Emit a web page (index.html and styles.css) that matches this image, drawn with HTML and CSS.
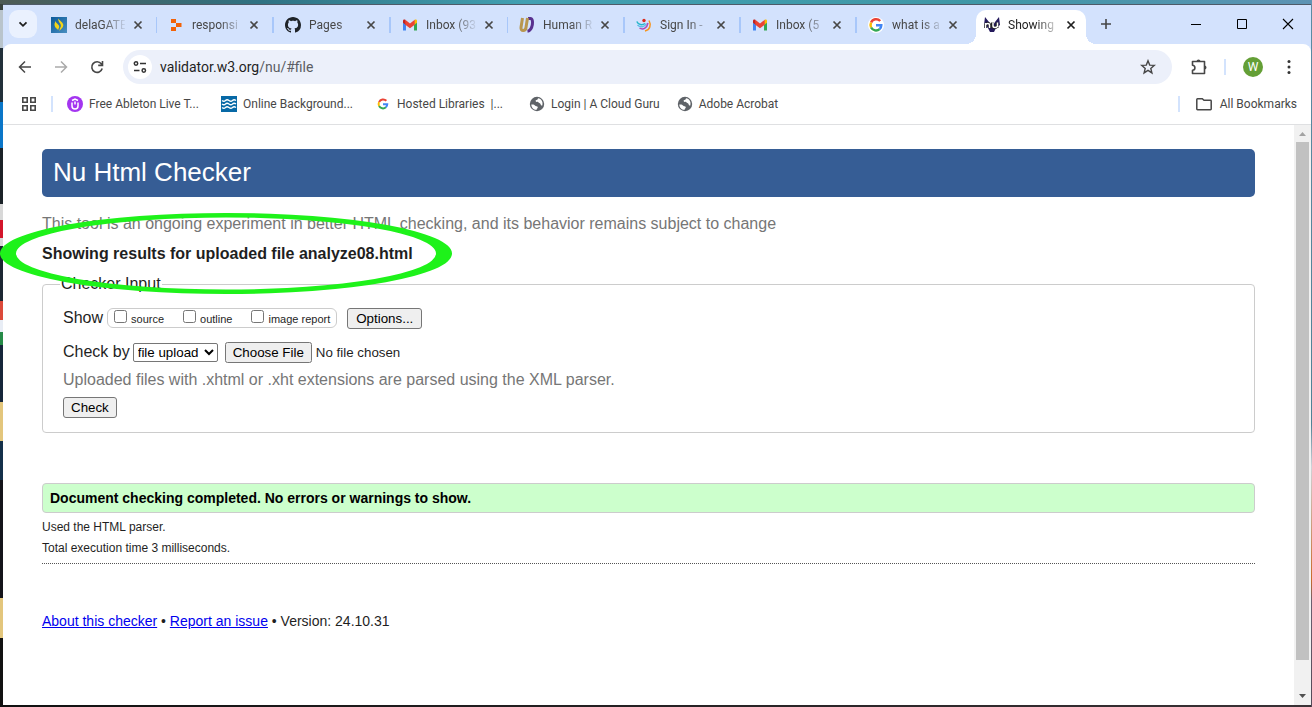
FILE: index.html
```html
<!DOCTYPE html>
<html lang="en">
<head>
<meta charset="utf-8">
<title>Showing results for uploaded file analyze08.html - Nu Html Checker</title>
<link rel="stylesheet" href="styles.css">
</head>
<body>
<svg width="0" height="0" class="defs" aria-hidden="true">
  <symbol id="x" viewBox="0 0 16 16"><path d="M4.500 4.500l7 7M11.500 4.500l-7 7" stroke="currentColor" stroke-width="1.700" fill="none"/></symbol>
  <symbol id="gmail" viewBox="0 0 16 16"><path d="M1 4v9.500h3V7z" fill="#4285f4"/><path d="M12 7v6.500h3V4z" fill="#34a853"/><path d="M12 4.500V8l3-2.300V4c0-1.500-1.500-1.800-2.300-1.200z" fill="#fbbc04"/><path d="M4 4.500V8L1 5.700V4c0-1.500 1.500-1.800 2.300-1.200z" fill="#c5221f"/><path d="M3.300 2.800L8 6.500l4.700-3.700v5L8 11.200 3.300 7.700z" fill="#ea4335"/></symbol>
  <symbol id="goog" viewBox="0 0 16 16"><g fill="none" stroke-width="2.500"><path d="M12.200 4A5.500 5.500 0 0 0 3.100 5.600" stroke="#ea4335"/><path d="M3.100 5.600a5.500 5.500 0 0 0 0 4.900" stroke="#fbbc05"/><path d="M3.100 10.500a5.500 5.500 0 0 0 8.500 1.600" stroke="#34a853"/><path d="M11.600 12.100A5.500 5.500 0 0 0 13.300 8.200H8" stroke="#4285f4"/></g></symbol>
  <symbol id="globe" viewBox="0 0 16 16"><circle cx="8" cy="8" r="7.200" fill="#5f6368"/><path d="M2.300 8.500c2-.3 3 .2 4 1.200.8.900 2.600.2 2.500 1.700 0 1-1.200 1-1.300 2.500C4.500 13.800 2.300 11.500 2.300 8.500zM9 2.300c-.4 1-.3 1.500-1.500 1.700-1.200.2-1 1.300-.4 1.700.9.500 1.800-.2 2.500.9.700 1 2 .5 2.100 1.900.1 1 .9 1.200 1.600.9C14.300 6 12.500 2.700 9 2.300z" fill="#fff"/></symbol>
</svg>
<div class="window">
  <header class="tabstrip">
    <button class="tabsearch" aria-label="Search tabs"><svg viewBox="0 0 16 16"><path d="M4.500 6.300L8 9.800l3.500-3.500" stroke="#1f1f1f" stroke-width="1.800" fill="none"/></svg></button>
    <nav class="tabs">
      <div class="tab"><svg class="fav" viewBox="0 0 16 16"><defs><linearGradient id="b" x2="1" y2="1"><stop stop-color="#0b5a9a"/><stop offset="1" stop-color="#4a8fc0"/></linearGradient></defs><path d="M0 0h16v16H0z" fill="url(#b)"/><path d="M7 1.500C9.500 4 12.500 6 12.300 8.500 12 11 9.500 12 8.500 14c-.3-2.500 2-4 1.300-6C9.300 6 7 4.500 7 1.500zM4.500 4C5 6.500 8.500 7.500 8.200 10c-.2 1.300-1 2-1 3C5.500 11.500 3.500 10 3.500 7.500c0-1.500.8-2.300 1-3.500z" fill="#f4d516"/></svg><a href="#tab1" class="title">delaGATE</a><button aria-label="Close tab"><svg><use href="#x"/></svg></button></div>
      <div class="tab"><svg class="fav" viewBox="0 0 16 16"><path d="M3 2h5v4H3zM8 6h5.500v4H8zM3 10h5v4H3z" fill="#f26207"/></svg><a href="#tab2" class="title">responsi</a><button aria-label="Close tab"><svg><use href="#x"/></svg></button></div>
      <div class="tab"><svg class="fav" viewBox="0 0 16 16"><path fill="#1f2328" d="M8 0C3.580 0 0 3.580 0 8c0 3.540 2.290 6.530 5.470 7.590.4.070.55-.17.55-.38 0-.19-.01-.82-.01-1.490-2.010.37-2.530-.49-2.690-.94-.09-.23-.48-.94-.82-1.130-.28-.15-.68-.52-.01-.53.63-.01 1.080.58 1.230.82.72 1.210 1.870.87 2.330.66.07-.52.28-.87.51-1.070-1.780-.2-3.640-.89-3.640-3.950 0-.87.31-1.590.82-2.150-.08-.2-.36-1.020.08-2.120 0 0 .67-.21 2.200.82.64-.18 1.320-.27 2-.27s1.360.09 2 .27c1.530-1.040 2.200-.82 2.200-.82.44 1.100.16 1.920.08 2.120.51.56.82 1.270.82 2.150 0 3.070-1.870 3.750-3.650 3.950.29.25.54.73.54 1.480 0 1.070-.01 1.930-.01 2.200 0 .21.15.46.55.38A8 8 0 0 0 16 8c0-4.420-3.580-8-8-8z"/></svg><a href="#tab3" class="title">Pages</a><button aria-label="Close tab"><svg><use href="#x"/></svg></button></div>
      <div class="tab"><svg class="fav"><use href="#gmail"/></svg><a href="#tab4" class="title">Inbox (93</a><button aria-label="Close tab"><svg><use href="#x"/></svg></button></div>
      <div class="tab"><svg class="fav" viewBox="0 0 16 16"><path d="M9 1.500h2.500c3.500 0 2.500 12-3 12.700" stroke="#59318f" stroke-width="3" fill="none"/><path d="M3.500 1L2 10.500c-.5 4 4.500 4 5 0L8.500 1" stroke="#b8974f" stroke-width="3" fill="none"/></svg><a href="#tab5" class="title">Human R</a><button aria-label="Close tab"><svg><use href="#x"/></svg></button></div>
      <div class="tab"><svg class="fav" viewBox="0 0 16 16"><g fill="none" stroke-width="1.500"><path d="M.8 4.500c1.500 3.500 5.500 4 8.200 2" stroke="#25b5c9"/><path d="M1.500 8c3 2.800 7 2.200 9-1.500" stroke="#5ebde8"/><path d="M3.500 11.200c4 2 7.500-.5 8.500-5.200" stroke="#b04bb5"/><path d="M9 14c5-1 6.500-6 4-10.500" stroke="#f7941d"/></g><circle cx="8" cy="3.500" r="1.700" fill="#d9291c"/></svg><a href="#tab6" class="title">Sign In -</a><button aria-label="Close tab"><svg><use href="#x"/></svg></button></div>
      <div class="tab"><svg class="fav"><use href="#gmail"/></svg><a href="#tab7" class="title">Inbox (5</a><button aria-label="Close tab"><svg><use href="#x"/></svg></button></div>
      <div class="tab"><svg class="fav round"><use href="#goog"/></svg><a href="#tab8" class="title">what is a</a><button aria-label="Close tab"><svg><use href="#x"/></svg></button></div>
      <div class="tab active"><svg class="fav" viewBox="0 0 16 16"><path d="M1 0l4 5 3 5 3-5 4-5 1 8-4 3-2 4H6l-2-4-4-3z" fill="#241a5c"/><path d="M1.500 11V6.500M1.500 8c1-2 4-2 4 0v3M8.500 5.500V9c0 2 4 2 4.500 0V5.500V11" stroke="#222" stroke-width="3" fill="none"/><path d="M1.500 11V6M1.500 8c1-2 4-2 4 0v3M9 5.500V9c0 2 4 2 4.500 0V5.500V10" stroke="#fff" stroke-width="1.500" fill="none"/></svg><a href="#tab9" class="title">Showing</a><button aria-label="Close tab"><svg><use href="#x"/></svg></button></div>
    </nav>
    <button class="newtab" aria-label="New tab"><svg viewBox="0 0 16 16"><path d="M8 3v10M3 8h10" stroke="#474747" stroke-width="1.600"/></svg></button>
    <div class="controls">
      <button aria-label="Minimize"><svg viewBox="0 0 16 16"><path d="M3 8.500h10" stroke="#000"/></svg></button>
      <button aria-label="Maximize"><svg viewBox="0 0 16 16"><path d="M3.500 3.500h9v9h-9z" stroke="#000" fill="none"/></svg></button>
      <button aria-label="Close"><svg viewBox="0 0 16 16"><path d="M3 3l10 10M13 3L3 13" stroke="#000" stroke-width="1.100"/></svg></button>
    </div>
  </header>
  <div class="chrome">
    <div class="toolbar">
      <button class="tool" aria-label="Back"><svg viewBox="0 0 16 16"><path d="M14 8H3M8 2.500L2.500 8 8 13.500" stroke="#474747" stroke-width="1.500" fill="none"/></svg></button>
      <button class="tool" aria-label="Forward"><svg viewBox="0 0 16 16"><path d="M2 8h11M8 2.500L13.500 8 8 13.500" stroke="#aaa" stroke-width="1.500" fill="none"/></svg></button>
      <button class="tool" aria-label="Reload"><svg viewBox="0 0 16 16"><path d="M13.200 9.500A5.300 5.300 0 1 1 12.300 4.800L13.500 6M13.500 2v4.400H9.200" stroke="#474747" stroke-width="1.600" fill="none"/></svg></button>
      <div class="omnibox">
        <button class="siteinfo" aria-label="Site information"><svg viewBox="0 0 16 16"><g fill="none" stroke="#333" stroke-width="1.500"><circle cx="4" cy="4.500" r="1.700"/><path d="M8 4.500h6M2 11.500h5.500"/><circle cx="11.800" cy="11.500" r="1.700"/></g></svg></button>
        <div class="url" role="textbox" aria-label="Address">validator.w3.org<span>/nu/#file</span></div>
        <button class="star" aria-label="Bookmark this tab"><svg viewBox="0 0 16 16"><path d="M8 1.800l1.700 4.300 4.600.3-3.500 3 1.100 4.500L8 11.400l-3.900 2.500 1.100-4.500-3.500-3 4.600-.3z" fill="none" stroke="#474747" stroke-width="1.400"/></svg></button>
      </div>
      <button class="ext" aria-label="Extensions"><svg viewBox="0 0 18 18"><path d="M2.500 3.500h12v12h-12v-3.200c3.200 0 3.200-5 0-5z" fill="none" stroke="#474747" stroke-width="1.600" stroke-linejoin="round"/><path d="M6.500 3.500a2 2 0 0 1 4 0zM14.500 7.500a2 2 0 0 1 0 4z" fill="#474747"/></svg></button>
      <span class="bar"></span>
      <button class="avatar" aria-label="Profile">W</button>
      <button class="menu" aria-label="Menu"><svg viewBox="0 0 16 16"><g fill="#333"><circle cx="8" cy="2.500" r="1.500"/><circle cx="8" cy="8" r="1.500"/><circle cx="8" cy="13.500" r="1.500"/></g></svg></button>
    </div>
    <nav class="bookmarks">
      <button class="apps" aria-label="Apps"><svg viewBox="0 0 16 16"><path d="M1.800 1.800h4.400v4.400H1.800zM9.800 1.800h4.400v4.400H9.800zM1.800 9.800h4.400v4.400H1.800zM9.800 9.800h4.400v4.400H9.800z" fill="none" stroke="#474747" stroke-width="1.600"/></svg></button>
      <span class="bar"></span>
      <a href="#b1" class="bm clip"><svg viewBox="0 0 16 16"><circle cx="8" cy="8" r="8" fill="#a435f0"/><path d="M5 6.500V10a3 3 0 0 0 6 0V6.500M5 4.500L8 3l3 1.500M8 5.500v3" fill="none" stroke="#fff" stroke-width="1.500"/></svg><span>Free Ableton Live T...</span></a>
      <a href="#b2" class="bm clip"><svg viewBox="0 0 16 16"><path d="M0 0h16v16H0z" fill="#0769a6"/><path d="M1 4.500q2 1.500 3.500 0t3.500 0 3.500 0 3.500 0M1 8q2 1.500 3.500 0t3.500 0 3.500 0 3.500 0M1 11.500q2 1.500 3.500 0t3.500 0 3.500 0 3.500 0" stroke="#fff" stroke-width="1.300" fill="none"/></svg><span>Online Background...</span></a>
      <a href="#b3" class="bm clip"><svg viewBox="-2 -2 20 20"><use href="#goog" width="16" height="16"/></svg><span>Hosted Libraries &nbsp;|...</span></a>
      <a href="#b4" class="bm"><svg><use href="#globe"/></svg><span>Login | A Cloud Guru</span></a>
      <a href="#b5" class="bm"><svg><use href="#globe"/></svg><span>Adobe Acrobat</span></a>
      <div class="allbm"><span class="bar"></span><a href="#all" class="bm"><svg viewBox="0 0 16 16"><path d="M.8 3.500V13c0 .4.300.7.700.7h13c.4 0 .7-.3.700-.7V5c0-.4-.3-.7-.7-.7H8L6.300 2.700H1.500c-.4 0-.7.300-.7.800z" fill="none" stroke="#474747" stroke-width="1.500"/></svg><span>All Bookmarks</span></a></div>
    </nav>
  </div>
  <div class="viewport">
    <main class="page">
      <h1>Nu Html Checker</h1>
      <p class="lead">This tool is an ongoing experiment in better HTML checking, and its behavior remains subject to change</p>
      <h2>Showing results for uploaded file analyze08.html</h2>
      <form>
        <fieldset class="input">
          <legend>Checker Input</legend>
          <div class="row show">
            <span>Show</span>
            <span class="checks">
              <span class="check"><input type="checkbox" id="src"><label for="src">source</label></span>
              <span class="check"><input type="checkbox" id="out"><label for="out">outline</label></span>
              <span class="check"><input type="checkbox" id="img"><label for="img">image report</label></span>
            </span>
            <button type="button" class="btn">Options...</button>
          </div>
          <div class="row by">
            <label for="by">Check by</label>
            <select id="by"><option>file upload</option></select>
            <input type="file" aria-label="File to check">
          </div>
          <p class="note">Uploaded files with .xhtml or .xht extensions are parsed using the XML parser.</p>
          <button type="button" class="btn">Check</button>
        </fieldset>
      </form>
      <p class="success">Document checking completed. No errors or warnings to show.</p>
      <p class="detail">Used the HTML parser.</p>
      <p class="detail">Total execution time 3 milliseconds.</p>
      <hr>
      <p class="about"><a href="#about">About this checker</a> • <a href="#issue">Report an issue</a> • Version: 24.10.31</p>
    </main>
    <div class="scroll" aria-hidden="true">
      <svg viewBox="0 0 17 17"><path d="M5 11l3.500-4 3.500 4z" fill="#a3a3a3"/></svg>
      <div class="thumb"></div>
      <svg viewBox="0 0 17 17"><path d="M5 6l3.500 4L12 6z" fill="#505050"/></svg>
    </div>
  </div>
</div>
<svg class="ring" viewBox="0 0 452 81" aria-hidden="true"><path fill-rule="evenodd" fill="#1ef21a" d="M0 40.500a226 40.500 0 0 1 452 0a226 40.500 0 0 1-452 0zM16 40.500a210 36 0 0 0 420 0a210 36 0 0 0-420 0z"/></svg>
</body>
</html>
```
FILE: styles.css
```css
* { box-sizing: border-box; }
body {
  margin: 0;
  height: 100vh;
  padding: 4px 1px 2px 3px;
  display: flex;
  overflow: hidden;
  font-family: "Liberation Sans", Arial, sans-serif;
  background:
    linear-gradient(90deg, #4d5b55, #2f7283 20%, #41a0b2 40%, #3f97a6 75%, #5d93b4) top / 100% 4px no-repeat,
    linear-gradient(#5a8ca5, #4f8296 60%, #cfd3d8 66%, #c96a2a 82%, #6a6070 85%, #544a58) right / 1px 100% no-repeat,
    linear-gradient(90deg, #111, #3a3236) bottom / 100% 2px no-repeat,
    linear-gradient(#39433e 0 10px, #b9c4cc 10px 48px, #22303a 48px 102px, #0a76c8 102px 148px, #1b2228 148px 204px, #d8d8d8 204px 220px, #d3152b 220px 238px, #d8d8d8 238px 246px, #1d2733 246px 301px, #dc4a3a 301px 320px, #e8edf5 320px 332px, #268a48 332px 345px, #16263a 345px 402px, #e3c67c 402px 441px, #14304a 441px 480px, #14141a 480px 598px, #e3c67c 598px 638px, #111 638px);
}
button { border: 0; padding: 0; background: none; display: grid; place-items: center; }
a { color: inherit; text-decoration: none; }
svg { display: block; flex: none; }
h1, h2, p { margin: 0; }
.defs { position: absolute; }
.window { flex: 1; min-width: 0; display: flex; flex-direction: column; border-top: 1px solid #4e5a68; background: #d3e2fd; }
.tabstrip, .chrome { font-family: Roboto, "Open Sans", sans-serif; font-size: 12px; color: #474747; }
.tabstrip { display: flex; height: 39px; padding-left: 6px; }
.tabsearch { width: 28px; height: 28px; margin: 5px 3px 0 0; border-radius: 9px; background: #eaf1fe; }
.tabsearch svg { width: 16px; height: 16px; }
.tabs { display: flex; }
.tab { width: 117px; display: flex; align-items: center; padding-left: 11px; position: relative; }
.tab:nth-child(n+6) { width: 116px; }
.tab::after { content: ""; width: 2px; height: 16px; background: #a8c7fa; margin-left: 10px; }
.tab:nth-last-child(2)::after { visibility: hidden; }
.tab .fav { width: 16px; height: 16px; }
.tab .round { background: #fff; border-radius: 50%; }
.title { width: 50px; margin: 0 5px 0 8px; white-space: nowrap; -webkit-mask: linear-gradient(90deg, #000 28px, transparent 52px); mask: linear-gradient(90deg, #000 28px, transparent 52px); }
.tab button { width: 16px; height: 16px; color: #474747; }
.tab button svg { width: 16px; height: 16px; }
.tab.active { width: 110px; margin: 5px 0 0 3px; padding: 0 0 5px 8px; background: #fff; border-radius: 10px 10px 0 0; color: #1f1f1f; }
.tab.active button { color: #1f1f1f; }
.tab.active::before, .tab.active::after { content: ""; position: absolute; bottom: 0; width: 10px; height: 10px; margin: 0; }
.tab.active::before { left: -10px; background: radial-gradient(circle at 0 0, transparent 10px, #fff 10px); }
.tab.active::after { right: -10px; background: radial-gradient(circle at 100% 0, transparent 10px, #fff 10px); }
.newtab { width: 28px; height: 28px; margin: 5px 0 0 6px; }
.newtab svg { width: 16px; height: 16px; }
.controls { margin-left: auto; display: flex; }
.controls button { width: 46px; height: 38px; }
.controls svg { width: 16px; height: 16px; }
.chrome { background: #fff; border-radius: 8px 8px 0 0; border-bottom: 1px solid #dfe0e2; }
.bar { width: 2px; height: 16px; background: #d3e3fd; }
.toolbar { display: flex; align-items: center; padding: 6px 14px 0 4px; height: 40px; }
.tool { width: 36px; height: 34px; }
.tool svg { width: 16px; height: 16px; }
.omnibox { flex: 1; display: flex; align-items: center; height: 34px; margin-left: 8px; padding: 0 16px 0 5px; border-radius: 17px; background: #ecf0fa; }
.siteinfo { width: 24px; height: 24px; border-radius: 50%; background: #fff; }
.siteinfo svg { width: 16px; height: 16px; }
.url { flex: 1; margin-left: 8px; font-size: 14px; color: #1f1f1f; }
.url span { color: #5b5d63; }
.star svg { width: 16px; height: 16px; }
.ext { margin-left: 18px; }
.ext svg { width: 18px; height: 18px; }
.toolbar .bar { margin: 0 17px 0 16px; }
.avatar { width: 20px; height: 20px; border-radius: 50%; background: #649f36; color: #fff; font: 12px Roboto, sans-serif; }
.menu { margin-left: 18px; }
.menu svg { width: 16px; height: 16px; }
.bookmarks { display: flex; align-items: center; height: 40px; padding: 0 14px 0 18px; }
.apps svg { width: 16px; height: 16px; }
.apps { margin-right: 14px; }
.bookmarks > .bar { margin-right: 14px; }
.bm { display: flex; align-items: center; gap: 6px; margin-right: 17px; white-space: nowrap; }
.bm svg { width: 16px; height: 16px; }
.clip span { width: 115px; }
.allbm { display: flex; align-items: center; gap: 16px; margin-left: auto; }
.allbm .bm { margin: 0; gap: 8px; }
.viewport { flex: 1; display: flex; background: #fff; min-height: 0; }
.page { flex: 1; padding: 24px 39px 0; color: #1f1f1f; font-size: 16px; line-height: 18px; }
h1 { padding: 0 11px 2px; font-size: 26px; font-weight: 400; line-height: 46px; border-radius: 5px; background: #365d95; color: #fff; }
.lead { margin-top: 18px; color: #767676; }
h2 { margin: 12px 0 0; font-size: 16px; line-height: 18px; }
.input { margin: 12px 0 0; padding: 14px 20px 14px 17px; border: 1px solid #ccc; border-radius: 4px; }
.input legend { padding: 0 1px; }
.row, .note, .input > .btn { margin-left: 3px; }
.row { display: flex; align-items: center; height: 22px; }
.checks { display: flex; height: 20px; margin: 0 10px 0 4px; padding: 0 6px; gap: 19px; border: 1px solid #ccc; border-radius: 6px; font-size: 11px; }
.check { display: flex; align-items: center; gap: 4px; }
.check input { width: 13px; height: 13px; margin: 0 0 3px; }
.check label { padding-top: 1px; }
.btn { height: 21px; padding: 0 7px; border: 1px solid #767676; border-radius: 3px; background: #efefef; color: #000; font-family: inherit; }
.show .btn { padding: 0 8px; }
.by { margin-top: 12px; }
.by select { height: 19px; width: 85px; margin: 0 7px 0 3px; font-family: inherit; border: 1px solid #767676; border-radius: 2px; background: #fff; }
.by input { font-family: inherit; }
.note { margin-top: 8px; margin-bottom: 8px; color: #767676; }
.success { margin: 50px 0 4px; padding: 5px 7px; border: 1px solid #ccc; border-radius: 4px; background: #cfc; color: #000; font-size: 14px; font-weight: 700; }
.detail { font-size: 12px; line-height: 21px; }
hr { margin: 4px 0 0; border: 0; border-top: 1px dotted #555; }
.about { margin-top: 48px; font-size: 14px; }
.about a { color: #0000ee; text-decoration: underline; }
.scroll { width: 17px; display: flex; flex-direction: column; background: #f1f1f1; }
.scroll svg { width: 17px; height: 17px; }
.thumb { height: 518px; margin: 0 2px auto; background: #c1c1c1; }
.ring { position: absolute; left: 0; top: 213px; width: 452px; height: 81px; pointer-events: none; }
```
